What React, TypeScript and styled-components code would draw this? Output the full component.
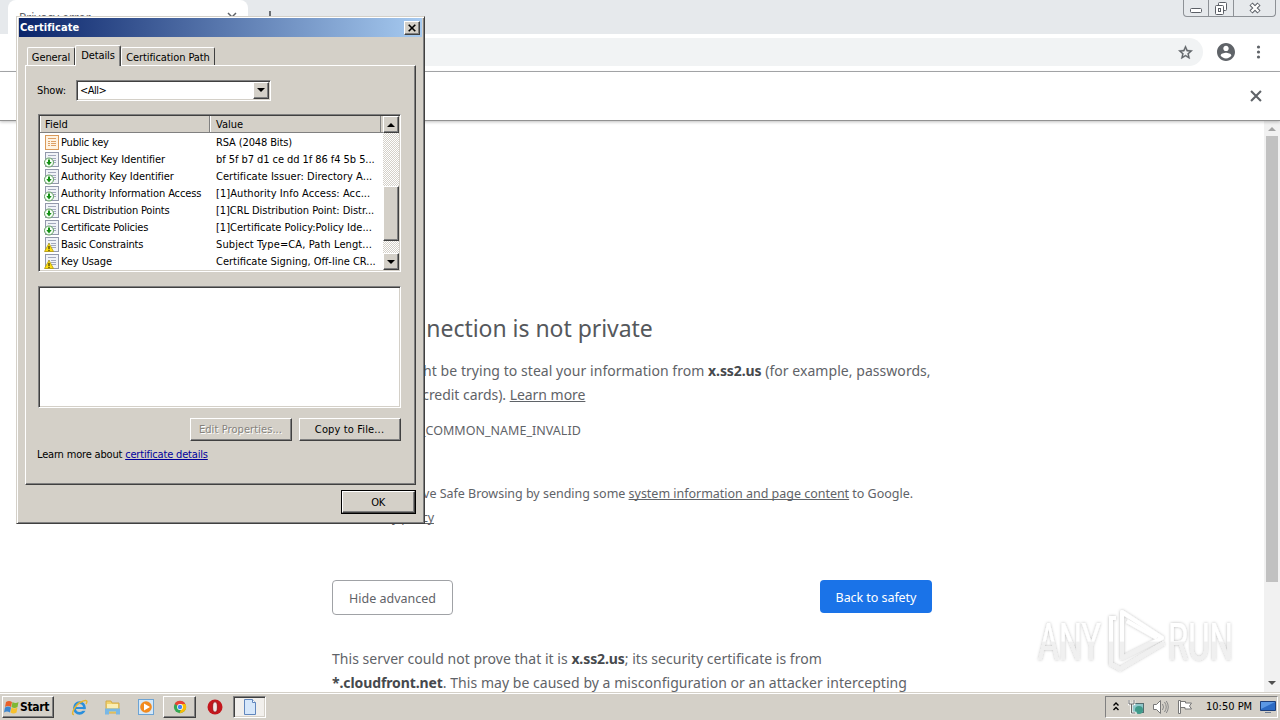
import React from 'react'

import styled, { createGlobalStyle, css } from 'styled-components'

const GlobalStyle = createGlobalStyle`
    * {
        box-sizing: border-box;
    }

    body {
        margin: 0;
        overflow: hidden;
        background: #fff;
    }
`

const uiFont = '"DejaVu Sans Condensed", "DejaVu Sans", sans-serif'
const pageFont = '"Noto Sans", "Open Sans", sans-serif'

const raised = css`
    border: 1px solid;
    border-color: #fff #404040 #404040 #fff;
    box-shadow: inset -1px -1px #808080;
`

const sunken = css`
    border: 1px solid;
    border-color: #808080 #fff #fff #808080;
    box-shadow: inset 1px 1px #404040, inset -1px -1px #d4d0c8;
`

const Text = styled.span<{ $track?: number }>`
    letter-spacing: ${p => p.$track || 0}px;
    white-space: nowrap;
`

const Desktop = styled.div`
    position: relative;
    display: flex;
    flex-direction: column;
    width: 1280px;
    height: 720px;
    overflow: hidden;
`

/* Browser */

const TabStrip = styled.div`
    display: flex;
    align-items: flex-start;
    height: 34px;
    flex: none;
    padding-left: 8px;
    background: #e6e9ec;
`

const BrowserTab = styled.div`
    display: flex;
    justify-content: space-between;
    width: 240px;
    height: 34px;
    padding: 10px 10px 0 11px;
    border-radius: 8px 8px 0 0;
    background: #fff;
    font: 12px/15px ${pageFont};
    color: #5f6368;
`

const NewTab = styled.svg`
    margin: 9px 0 0 15px;
`

const WindowControls = styled.div`
    display: flex;
    height: 17px;
    margin: 0 4px 0 auto;
    border: 1px solid #8d9196;
    border-top: 0;
    border-radius: 0 0 4px 4px;
`

const WindowControl = styled.div<{ $width: number }>`
    display: flex;
    justify-content: center;
    width: ${p => p.$width}px;

    & + & {
        border-left: 1px solid #8d9196;
    }
`

const Toolbar = styled.div`
    display: flex;
    align-items: center;
    flex: none;
    height: 38px;
    padding: 0 13px 1px 0;
    border-bottom: 1px solid #a9abad;
    background: #fff;
`

const Omnibox = styled.div`
    display: flex;
    align-items: center;
    justify-content: flex-end;
    width: 1087px;
    height: 28px;
    margin: 0 14px 0 116px;
    padding-right: 9px;
    border-radius: 14px;
    background: #f1f3f4;
`

const MenuIcon = styled.svg`
    margin-left: auto;
`

const InfoBar = styled.div`
    position: relative;
    display: flex;
    align-items: center;
    justify-content: flex-end;
    flex: none;
    height: 49px;
    padding-right: 18px;
    border-bottom: 1px solid #929292;
    box-shadow: 0 1px 3px rgba(0, 0, 0, 0.25);
    background: #fff;
`

const Viewport = styled.div`
    display: flex;
    flex: 1;
    min-height: 0;
    overflow: hidden;
`

const Page = styled.main`
    flex: 1;
    height: 571px;
    padding: 189px 0 0 332px;
    overflow: hidden;
    font: 14px/24px ${pageFont};
    color: #5f6368;
`

const Heading = styled.h1`
    height: 36px;
    margin: 0 0 13px;
    font-size: 23px;
    line-height: 36px;
    font-weight: 400;
    color: #55585c;
`

const Paragraph = styled.div<{ $small?: boolean; $gap?: number; $indent?: number }>`
    margin-bottom: ${p => p.$gap || 0}px;
    padding-left: ${p => p.$indent || 0}px;
    font-size: ${p => p.$small ? 12.5 : 14}px;
`

const Strong = styled.b`
    color: #46494d;
    letter-spacing: -0.1px;
`

const PageLink = styled.span`
    text-decoration: underline;
    text-decoration-skip-ink: none;
    text-underline-offset: 1px;
`

const Actions = styled.div`
    display: flex;
    justify-content: space-between;
    align-items: flex-start;
    width: 600px;
    margin: 50px 0 32px;
`

const PageButton = styled.button<{ $primary?: boolean }>`
    width: ${p => p.$primary ? 112 : 121}px;
    height: ${p => p.$primary ? 33 : 35}px;
    padding: 2px 0 0;
    border: ${p => p.$primary ? '0' : '1px solid #a0a2a6'};
    border-radius: 4px;
    background: ${p => p.$primary ? '#1a73e8' : '#fff'};
    color: ${p => p.$primary ? '#fff' : '#5f6368'};
    font: 12.5px ${pageFont};
`

const PageScroll = styled.div`
    display: flex;
    flex-direction: column;
    align-items: center;
    width: 16px;
    height: 571px;
    background: #f1f1f1;
`

const PageThumb = styled.div`
    width: 12px;
    height: 446px;
    background: #c1c1c1;
`

const ScrollArrow = styled.div<{ $down?: boolean }>`
    width: 0;
    margin: ${p => p.$down ? 'auto 0 7px' : '6px 0 5px'};
    border: 4px solid transparent;
    ${p => p.$down
        ? 'border-top-color: #505050; border-bottom: 0;'
        : 'border-bottom-color: #a3a3a3; border-top: 0;'}
`

const Watermark = styled.svg`
    position: absolute;
    left: 1020px;
    top: 590px;
`

/* Certificate dialog */

const Dialog = styled.section`
    position: absolute;
    left: 16px;
    top: 16px;
    width: 409px;
    height: 508px;
    padding: 1px 3px;
    border: 1px solid;
    border-color: #d4d0c8 #404040 #404040 #d4d0c8;
    box-shadow: inset 1px 1px #fff, inset -1px -1px #808080;
    background: #d4d0c8;
    font: 11px/13px ${uiFont};
    color: #000;
`

const TitleBar = styled.header`
    display: flex;
    align-items: center;
    justify-content: space-between;
    height: 19px;
    margin: 0 -1px -1px;
    padding: 0 2px 0 1px;
    background: linear-gradient(90deg, #0a246a, #a6caf0);
    color: #fff;
    font-weight: bold;
`

const CloseButton = styled.div`
    ${raised}
    display: flex;
    align-items: center;
    justify-content: center;
    width: 16px;
    height: 14px;
    background: #d4d0c8;
`

const Tabs = styled.nav`
    display: flex;
    align-items: flex-end;
    height: 29px;
    padding-left: 7px;
`

const Tab = styled.div<{ $width: number; $active?: boolean }>`
    position: relative;
    width: ${p => p.$width}px;
    height: ${p => p.$active ? 21 : 18}px;
    margin-bottom: ${p => p.$active ? -1 : 0}px;
    padding-top: 3px;
    border: 1px solid;
    border-color: #fff #404040 transparent #fff;
    border-bottom: 0;
    border-radius: 2px 2px 0 0;
    background: #d4d0c8;
    text-align: center;
    z-index: ${p => p.$active ? 1 : 0};
    ${p => p.$active && 'box-shadow: inset -1px 0 #808080;'}
`

const Panel = styled.div`
    ${raised}
    width: 391px;
    height: 420px;
    margin-left: 5px;
    padding: 13px 14px 0 12px;
`

const ShowRow = styled.div`
    display: flex;
    align-items: center;
    height: 22px;
    margin: 0 0 13px -1px;
`

const ShowLabel = styled.div`
    width: 39px;
    letter-spacing: -0.1px;
`

const Select = styled.div`
    ${sunken}
    display: flex;
    align-items: center;
    justify-content: space-between;
    width: 195px;
    height: 21px;
    padding: 1px 1px 1px 3px;
    background: #fff;
`

const SquareButton = styled.div`
    ${raised}
    display: flex;
    align-items: center;
    justify-content: center;
    flex: none;
    width: 16px;
    height: 17px;
    background: #d4d0c8;
`

const Triangle = styled.div<{ $down?: boolean }>`
    border: 4px solid transparent;
    ${p => p.$down
        ? 'border-top-color: #000; border-bottom: 0;'
        : 'border-bottom-color: #000; border-top: 0;'}
`

const ListView = styled.div`
    ${sunken}
    display: flex;
    width: 363px;
    height: 158px;
    padding: 1px;
    overflow: hidden;
    background: #fff;
`

const Table = styled.div`
    width: 343px;
    overflow: hidden;
`

const HeaderRow = styled.div`
    display: flex;
    height: 17px;
    margin-bottom: 1px;
    border-bottom: 1px solid #808080;
    background: #d4d0c8;
    line-height: 18px;
`

const HeaderCell = styled.div<{ $width: number }>`
    width: ${p => p.$width}px;
    padding-left: 5px;
    border-left: 1px solid #fff;
    border-right: 1px solid #808080;

    &:first-child {
        padding-left: 4px;
    }
`

const FieldRow = styled.div`
    display: grid;
    grid-template-columns: 17px 155px 164px;
    align-items: center;
    height: 17px;
    padding-left: 4px;
    line-height: 17px;
`

const ListScroll = styled.div`
    display: flex;
    flex-direction: column;
    width: 16px;
    background: repeating-conic-gradient(#fff 0 25%, #d4d0c8 0 50%) 0 0 / 2px 2px;
`

const ListThumb = styled.div`
    ${raised}
    height: 55px;
    margin: 53px 0 12px;
    background: #d4d0c8;
`

const DetailBox = styled.div`
    ${sunken}
    width: 363px;
    height: 122px;
    margin: 14px 0 10px;
    background: #fff;
`

const ButtonRow = styled.div`
    display: flex;
    justify-content: flex-end;
    gap: 7px;
`

const Button = styled.button<{ $width?: number; $default?: boolean }>`
    ${raised}
    width: ${p => p.$width || 102}px;
    height: 23px;
    padding: 0 1px 0 0;
    background: #d4d0c8;
    font: 11px/13px ${uiFont};
    color: #000;

    &:disabled {
        color: #85827c;
        text-shadow: 1px 1px #fff;
    }

    ${p => p.$default && 'outline: 1px solid #000;'}
`

const LearnMore = styled.div`
    margin-top: 7px;
    margin-left: -1px;
`

const DialogLink = styled.span`
    color: #00009c;
    text-decoration: underline;
`

const DialogFooter = styled.footer`
    display: flex;
    justify-content: flex-end;
    padding: 6px 6px 0 0;

    ${Button} {
        height: 22px;
    }
`

/* Taskbar */

const Taskbar = styled.div`
    display: flex;
    align-items: flex-start;
    flex: none;
    height: 28px;
    padding: 3px 2px 0 2px;
    border-top: 1px solid #d4d0c8;
    box-shadow: inset 0 1px #fff;
    background: #d4d0c8;
`

const StartButton = styled.div`
    ${raised}
    display: flex;
    align-items: center;
    width: 52px;
    height: 22px;
    margin-right: 9px;
    font: bold 12px/20px ${uiFont};
`

const TaskItem = styled.div<{ $state?: 'open' | 'active' }>`
    display: flex;
    align-items: center;
    justify-content: center;
    width: 33px;
    height: 22px;
    margin-left: ${p => p.$state === 'active' ? 2 : 0}px;
    margin-right: ${p => p.$state === 'open' ? 2 : 0}px;
    ${p => p.$state === 'open' && raised}
    ${p => p.$state === 'active' && sunken}
    ${p => p.$state === 'active' && 'background: #f1efec;'}

    &:nth-child(5) {
        margin-left: 1px;
    }
`

const Tray = styled.div`
    display: flex;
    align-items: center;
    width: 173px;
    height: 22px;
    margin-left: auto;
    padding: 0 1px 0 6px;
    border: 1px solid;
    border-color: #808080 #fff #fff #808080;
    font: 11px/20px ${uiFont};
`

const TrayIcons = styled.div`
    display: flex;
    align-items: center;
    gap: 8px;
    margin-right: 13px;
`

const ShowDesktop = styled.svg`
    margin-left: auto;
`

type Kind = 'key' | 'extension' | 'critical'

interface IField {
    kind: Kind
    name: string
    value: string
    nameTrack?: number
    valueTrack?: number
}

const fields: IField[] = [
    { kind: 'key', name: 'Public key', value: 'RSA (2048 Bits)', nameTrack: -0.2, valueTrack: -0.13 },
    { kind: 'extension', name: 'Subject Key Identifier', value: 'bf 5f b7 d1 ce dd 1f 86 f4 5b 5...', nameTrack: -0.08, valueTrack: -0.06 },
    { kind: 'extension', name: 'Authority Key Identifier', value: 'Certificate Issuer: Directory A...', nameTrack: -0.08, valueTrack: 0.03 },
    { kind: 'extension', name: 'Authority Information Access', value: '[1]Authority Info Access: Acc...', nameTrack: -0.1, valueTrack: 0.07 },
    { kind: 'extension', name: 'CRL Distribution Points', value: '[1]CRL Distribution Point: Distr...', nameTrack: -0.2, valueTrack: -0.06 },
    { kind: 'extension', name: 'Certificate Policies', value: '[1]Certificate Policy:Policy Ide...', nameTrack: -0.2 },
    { kind: 'critical', name: 'Basic Constraints', value: 'Subject Type=CA, Path Lengt...', nameTrack: -0.22, valueTrack: 0.1 },
    { kind: 'critical', name: 'Key Usage', value: 'Certificate Signing, Off-line CR...', nameTrack: -0.1 },
]

const FieldIcon = ({ kind }: { kind: Kind }) => (
    <svg width="16" height="17" viewBox="0 0 16 17">
        <rect x="1.5" y="1.5" width="13" height="14" fill={kind === 'key' ? '#fff3e2' : '#f1f3f8'} stroke={kind === 'key' ? '#d99a5b' : '#9298ab'} />
        <path d="M4 4.5h8M4 7.5h2M7 7.5h5M4 9.5h2M7 9.5h5M4 11.5h2M7 11.5h5" stroke={kind === 'key' ? '#dda066' : '#a3a9bd'} />
        {kind === 'extension' && (
            <>
                <circle cx="5" cy="11.5" r="4.5" fill="#f5fff5" stroke="#5c9a5c" />
                <path d="M5 8.5v3" stroke="#149014" strokeWidth="2" />
                <path d="M2.3 11h5.4L5 14.4z" fill="#149014" />
            </>
        )}
        {kind === 'critical' && (
            <>
                <path d="M5 7.3L9.5 15.5H.5z" fill="#ffdf12" stroke="#b29a10" strokeWidth=".8" />
                <path d="M5 10v3M5 13.8v1.2" stroke="#3b3100" strokeWidth="1.2" />
            </>
        )}
    </svg>
)

const Cross = ({ size = 8, color = '#000', width = 1.6 }) => (
    <svg width={size} height={size} viewBox="0 0 8 8">
        <path d="M.7.7l6.6 6.6M7.3.7L.7 7.3" stroke={color} strokeWidth={width} />
    </svg>
)

const CertificateDialog = () => (
    <Dialog>
        <TitleBar>
            <Text $track={0.05}>Certificate</Text>
            <CloseButton><Cross /></CloseButton>
        </TitleBar>
        <Tabs>
            <Tab $width={48}><Text $track={-0.1}>General</Text></Tab>
            <Tab $width={46} $active><Text $track={-0.1}>Details</Text></Tab>
            <Tab $width={94}><Text $track={-0.1}>Certification Path</Text></Tab>
        </Tabs>
        <Panel>
            <ShowRow>
                <ShowLabel>Show:</ShowLabel>
                <Select>
                    <Text $track={-0.5}>&lt;All&gt;</Text>
                    <SquareButton><Triangle $down /></SquareButton>
                </Select>
            </ShowRow>
            <ListView>
                <Table>
                    <HeaderRow>
                        <HeaderCell $width={170}><Text>Field</Text></HeaderCell>
                        <HeaderCell $width={171}><Text>Value</Text></HeaderCell>
                    </HeaderRow>
                    {fields.map(field => (
                        <FieldRow key={field.name}>
                            <FieldIcon kind={field.kind} />
                            <Text $track={field.nameTrack}>{field.name}</Text>
                            <Text $track={field.valueTrack}>{field.value}</Text>
                        </FieldRow>
                    ))}
                </Table>
                <ListScroll>
                    <SquareButton><Triangle /></SquareButton>
                    <ListThumb />
                    <SquareButton><Triangle $down /></SquareButton>
                </ListScroll>
            </ListView>
            <DetailBox />
            <ButtonRow>
                <Button disabled><Text $track={0.08}>Edit Properties...</Text></Button>
                <Button><Text $track={0.14}>Copy to File...</Text></Button>
            </ButtonRow>
            <LearnMore>
                <Text $track={-0.18}>Learn more about <DialogLink>certificate details</DialogLink></Text>
            </LearnMore>
        </Panel>
        <DialogFooter>
            <Button $width={73} $default><Text $track={-0.3}>OK</Text></Button>
        </DialogFooter>
    </Dialog>
)

const Browser = () => (
    <>
        <TabStrip>
            <BrowserTab>
                <span>Privacy error</span>
                <svg width="12" height="12" viewBox="0 0 12 12">
                    <path d="M2 3l8 8M10 3l-8 8" stroke="#5f6368" strokeWidth="1.5" />
                </svg>
            </BrowserTab>
            <NewTab width="14" height="14" viewBox="0 0 14 14">
                <path d="M7 2v12M1 8h12" stroke="#5f6368" strokeWidth="1.8" />
            </NewTab>
            <WindowControls>
                <WindowControl $width={24}>
                    <svg width="14" height="16"><rect x="1.5" y="8.5" width="11" height="4" rx="1" fill="#fff" stroke="#5b5f66" /></svg>
                </WindowControl>
                <WindowControl $width={25}>
                    <svg width="14" height="16">
                        <rect x="4.5" y="2.5" width="8" height="8" rx="1" fill="#fff" stroke="#5b5f66" />
                        <rect x="1.5" y="5.5" width="8" height="9" rx="1" fill="#fff" stroke="#5b5f66" />
                        <rect x="4.5" y="8.5" width="2" height="3" fill="#fff" stroke="#5b5f66" />
                    </svg>
                </WindowControl>
                <WindowControl $width={42}>
                    <svg width="14" height="16">
                        <path d="M3 4l8 8M11 4l-8 8" stroke="#5b5f66" strokeWidth="4.4" />
                        <path d="M3.5 4.5l7 7M10.5 4.5l-7 7" stroke="#fff" strokeWidth="2.4" />
                    </svg>
                </WindowControl>
            </WindowControls>
        </TabStrip>
        <Toolbar>
            <Omnibox>
                <svg width="17" height="17" viewBox="0 0 24 24" fill="#5f6368">
                    <path d="M22 9.24l-7.19-.62L12 2 9.19 8.63 2 9.24l5.46 4.73L5.82 21 12 17.27 18.18 21l-1.63-7.03L22 9.24zM12 15.4l-3.76 2.27 1-4.28-3.32-2.88 4.38-.38L12 6.1l1.71 4.04 4.38.38-3.32 2.88 1 4.28L12 15.4z" stroke="#5f6368" strokeWidth=".5" />
                </svg>
            </Omnibox>
            <svg width="18" height="18" viewBox="2 2 20 20" fill="#5f6368">
                <path d="M12 2C6.48 2 2 6.48 2 12s4.48 10 10 10 10-4.48 10-10S17.52 2 12 2zm0 3c1.66 0 3 1.34 3 3s-1.34 3-3 3-3-1.34-3-3 1.34-3 3-3zm0 14.2c-2.5 0-4.71-1.28-6-3.22.03-1.99 4-3.08 6-3.08 1.99 0 5.97 1.09 6 3.08-1.29 1.94-3.5 3.22-6 3.22z" />
            </svg>
            <MenuIcon width="17" height="16" fill="#5f6368">
                <circle cx="8.5" cy="3" r="1.6" />
                <circle cx="8.5" cy="8" r="1.6" />
                <circle cx="8.5" cy="13" r="1.6" />
            </MenuIcon>
        </Toolbar>
        <InfoBar><Cross size={12} color="#5f6368" width={1.4} /></InfoBar>
        <Viewport>
            <Page>
                <Heading><Text $track={-0.04}>Your connection is not private</Text></Heading>
                <Paragraph><Text $track={0.05}>Attackers might be trying to steal your information from <Strong>x.ss2.us</Strong> (for example, passwords,</Text></Paragraph>
                <Paragraph $gap={12}><Text $track={-0.04}>messages, or credit cards). <PageLink>Learn more</PageLink></Text></Paragraph>
                <Paragraph $small $gap={39}><Text $track={0.02}>NET::ERR_CERT_COMMON_NAME_INVALID</Text></Paragraph>
                <Paragraph $small $indent={26}><Text $track={-0.02}>Help improve Safe Browsing by sending some <PageLink>system information and page content</PageLink> to Google.</Text></Paragraph>
                <Paragraph $small $indent={26}><PageLink><Text $track={-0.22}>Privacy policy</Text></PageLink></Paragraph>
                <Actions>
                    <PageButton><Text>Hide advanced</Text></PageButton>
                    <PageButton $primary><Text $track={-0.06}>Back to safety</Text></PageButton>
                </Actions>
                <Paragraph><Text $track={0.03}>This server could not prove that it is <Strong>x.ss2.us</Strong>; its security certificate is from</Text></Paragraph>
                <Paragraph><Text $track={0.04}><Strong>*.cloudfront.net</Strong>. This may be caused by a misconfiguration or an attacker intercepting</Text></Paragraph>
            </Page>
            <PageScroll>
                <ScrollArrow />
                <PageThumb />
                <ScrollArrow $down />
            </PageScroll>
        </Viewport>
    </>
)

const AnyRun = () => (
    <Watermark width="240" height="102" viewBox="1020 590 240 102">
        <defs>
            <linearGradient id="fade" gradientUnits="userSpaceOnUse" x1="0" y1="610" x2="0" y2="672">
                <stop offset=".5" stopColor="#fff" />
                <stop offset=".52" stopColor="#f0f0f0" />
            </linearGradient>
            <filter id="glow" x="-20%" y="-20%" width="140%" height="140%">
                <feDropShadow dx="0" dy="0" stdDeviation="1.7" floodColor="#000" floodOpacity=".28" />
            </filter>
        </defs>
        <g filter="url(#glow)" fill="url(#fade)" fontFamily="Roboto, sans-serif" fontSize="52">
            <text x="1038" y="660" textLength="63" lengthAdjust="spacingAndGlyphs">ANY</text>
            <text x="1168" y="660" textLength="65" lengthAdjust="spacingAndGlyphs">RUN</text>
            <g fill="none" stroke="url(#fade)" strokeWidth="4">
                <path d="M1122 612v46l40-20z" strokeLinejoin="round" />
                <path d="M1116 618h-5v46l9 5 44-26M1127 621l30 17" />
            </g>
        </g>
    </Watermark>
)

const SystemBar = () => (
    <Taskbar>
        <StartButton>
            <svg width="17" height="16" viewBox="0 0 17 16">
                <path d="M3 3q3-2 6 0l-1 5q-3-2-6 0z" fill="#e9612a" />
                <path d="M9.5 3q3 2 6 0l-1 5q-3 2-6 0z" fill="#7fb832" />
                <path d="M2 8.5q3-2 6 0l-1 5q-3-2-6 0z" fill="#3c86cf" />
                <path d="M8.5 8.5q3 2 6 0l-1 5q-3 2-6 0z" fill="#f7c02c" />
            </svg>
            <Text $track={-0.3}>Start</Text>
        </StartButton>
        <TaskItem>
            <svg width="17" height="17" viewBox="0 0 17 17">
                <ellipse cx="8.5" cy="9" rx="5" ry="5.4" fill="none" stroke="#2a8fdc" strokeWidth="2.8" />
                <path d="M5 9h9" stroke="#2a8fdc" strokeWidth="2" />
                <path d="M10 11h6" stroke="#d4d0c8" strokeWidth="1.6" />
                <path d="M3 15.5C-1 16 4 6 10 3s7-1 5 2" fill="none" stroke="#e7b52d" strokeWidth="1.4" />
            </svg>
        </TaskItem>
        <TaskItem>
            <svg width="17" height="16" viewBox="0 0 17 16">
                <path d="M2 2h5l1 2h7v10H2z" fill="#f1d36c" stroke="#d3aa48" />
                <path d="M3 5h11v4H3z" fill="#fbeeb3" />
                <path d="M1 15.500V9.500h15v6h-4v-3H5v3z" fill="#79b8e6" />
            </svg>
        </TaskItem>
        <TaskItem>
            <svg width="16" height="16" viewBox="0 0 16 16">
                <rect x=".5" y=".5" width="15" height="15" fill="#d5e8f8" stroke="#6ca3d4" />
                <circle cx="8" cy="8" r="5.8" fill="#f28a1e" />
                <path d="M6 4.5v7l6-3.5z" fill="#fff" />
            </svg>
        </TaskItem>
        <TaskItem $state="open">
            <svg width="14" height="14" viewBox="0 0 16 16">
                <circle cx="8" cy="8" r="7" fill="#34a853" />
                <path d="M1.9 4.5A7 7 0 0 1 14.1 4.5L8 8z" fill="#ea4335" />
                <path d="M14.1 4.5A7 7 0 0 1 7.5 15L10 8 8 4.5z" fill="#fbbc05" />
                <circle cx="8" cy="8" r="3.3" fill="#fff" />
                <circle cx="8" cy="8" r="2.5" fill="#4285f4" />
            </svg>
        </TaskItem>
        <TaskItem>
            <svg width="16" height="16" viewBox="0 0 16 16">
                <ellipse cx="8" cy="8" rx="7.5" ry="7.5" fill="#c4161c" />
                <ellipse cx="8" cy="8" rx="2.4" ry="5.2" fill="#f0e6e4" stroke="#8c0f14" strokeWidth=".8" />
            </svg>
        </TaskItem>
        <TaskItem $state="active">
            <svg width="16" height="16" viewBox="0 0 16 16">
                <path d="M2.5.5h8l3 3v12h-11z" fill="#d6e7fa" stroke="#6086bd" />
                <path d="M10.5.5v3h3" fill="#fff" stroke="#6086bd" />
            </svg>
        </TaskItem>
        <Tray>
            <TrayIcons>
                <svg width="8" height="12" viewBox="0 0 8 12">
                    <path d="M1.5 4.5L4 2l2.5 2.500M1.5 9L4 6.500 6.500 9" fill="none" stroke="#000" strokeWidth="1.4" />
                </svg>
                <svg width="16" height="16" viewBox="0 0 16 16">
                    <rect x="4.5" y="4.5" width="11" height="9" fill="#8fc6ca" stroke="#556d70" />
                    <circle cx="11" cy="11" r="4" fill="#3f9a8a" />
                    <path d="M1 1v4h5V1M3.5 5v9h5" fill="none" stroke="#fff" strokeWidth="2.6" />
                    <path d="M1 1v4h5V1M3.5 5v9h4" fill="none" stroke="#666" />
                </svg>
                <svg width="17" height="16" viewBox="0 0 17 16">
                    <path d="M1.5 5.5h3l4-4v13l-4-4h-3z" fill="#fff" stroke="#777" />
                    <path d="M10.5 5q2 3 0 6M12.5 3q3.5 5 0 10M14.3 2q4 6 0 12" fill="none" stroke="#888" />
                </svg>
                <svg width="16" height="16" viewBox="0 0 16 16">
                    <path d="M1.5 1.5h2v13h-2zM3.5 2.5h5V4h6l-2 3 2 3H8V8.5H3.5z" fill="#fff" stroke="#777" />
                </svg>
            </TrayIcons>
            <Text>10:50 PM</Text>
            <ShowDesktop width="16" height="14" viewBox="0 0 16 14">
                <path d="M.5 1.5h15v9H.5z" fill="#2c6bc4" stroke="#1d3f7a" />
                <path d="M1 2h14L1 9z" fill="#5b98e4" />
                <path d="M5 12.5h6" stroke="#6e7c92" />
            </ShowDesktop>
        </Tray>
    </Taskbar>
)

const App = () => (
    <>
        <GlobalStyle />
        <Desktop>
            <Browser />
            <SystemBar />
            <AnyRun />
            <CertificateDialog />
        </Desktop>
    </>
)

export default App
